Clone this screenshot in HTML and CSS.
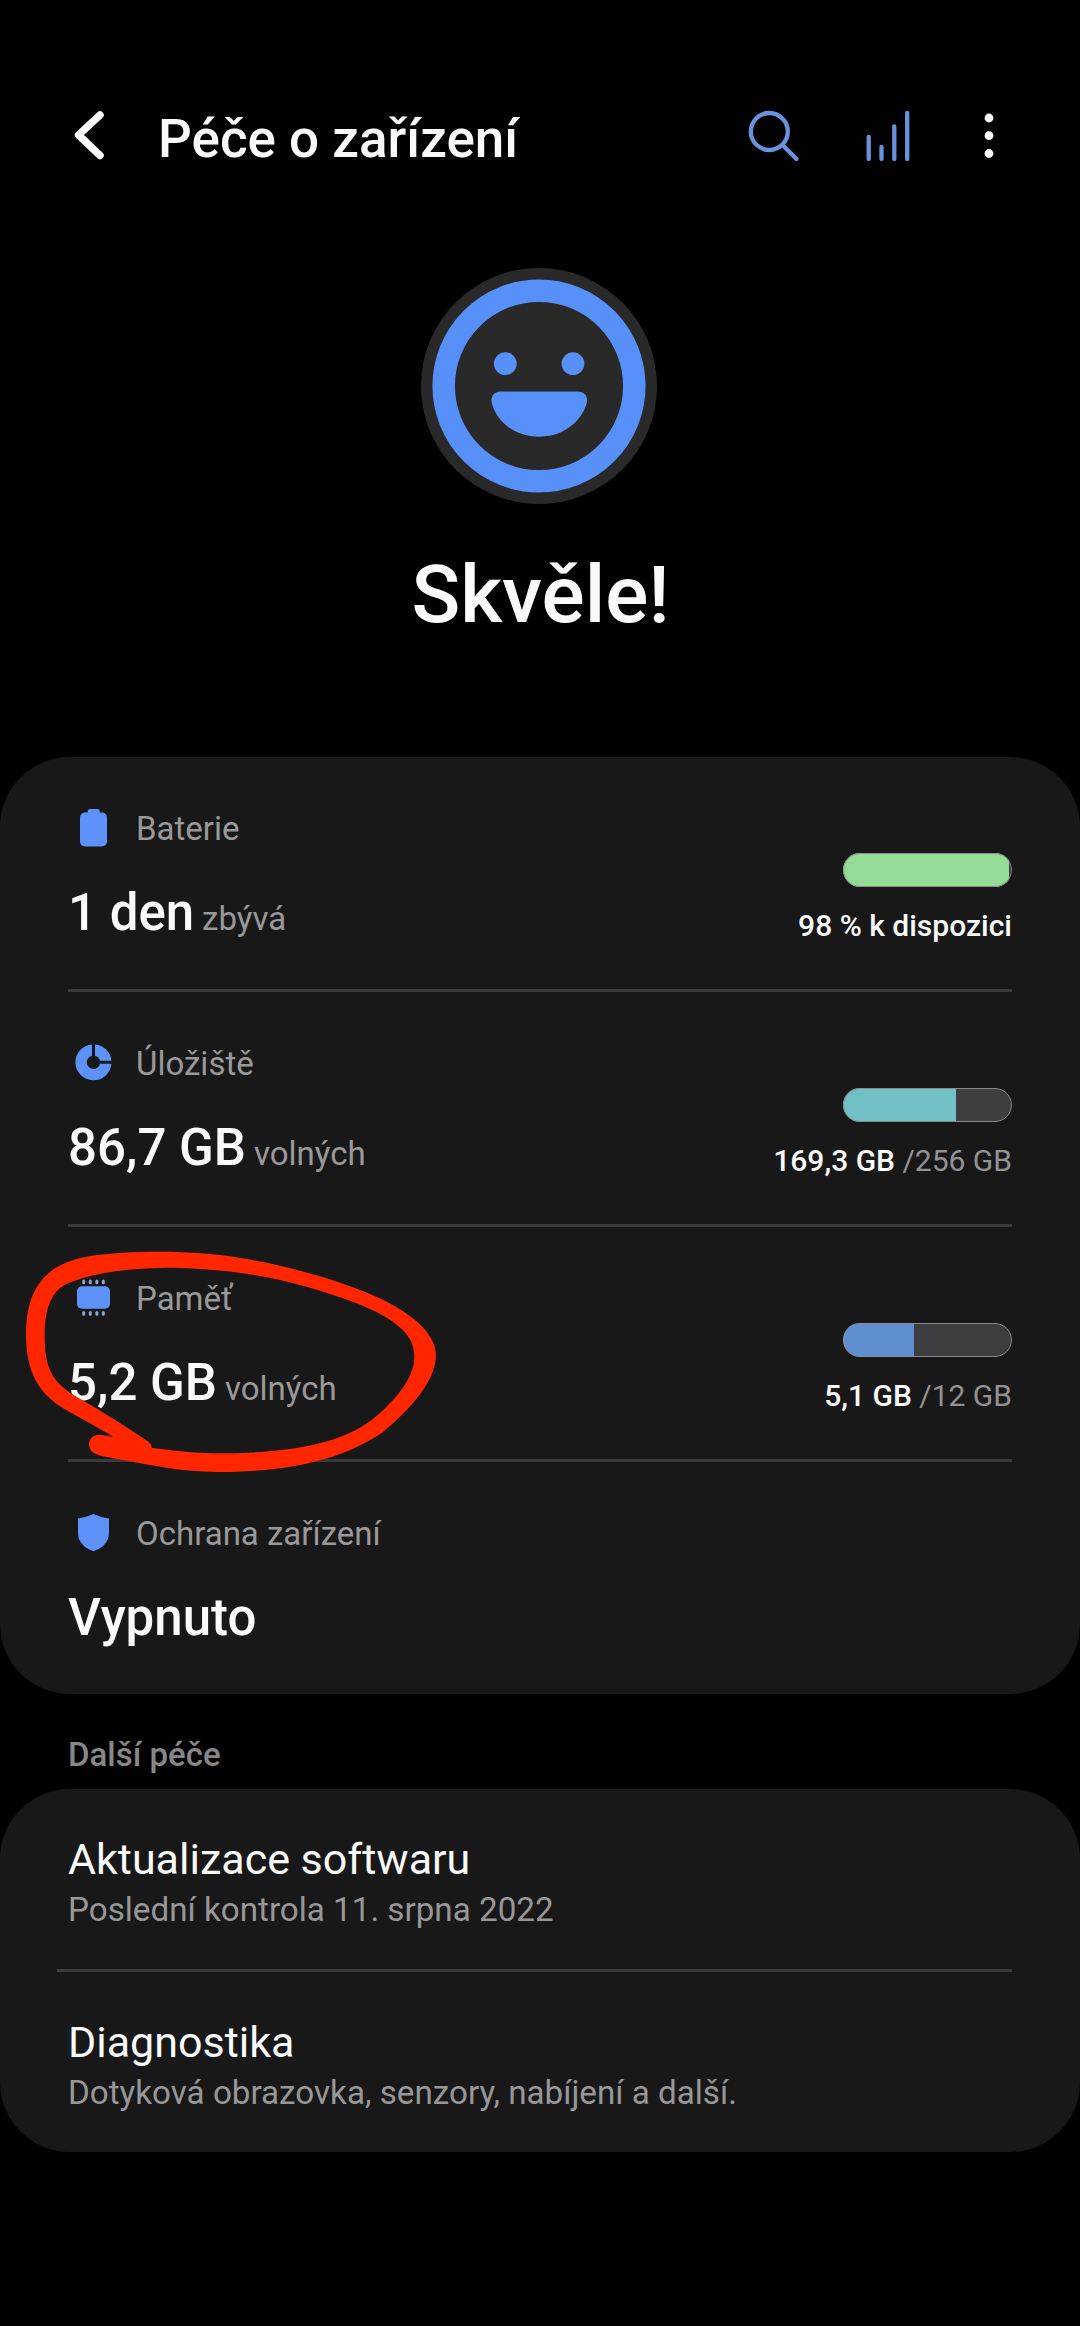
FILE: index.html
```html
<!DOCTYPE html>
<html lang="cs">
<head>
<meta charset="utf-8">
<title>Péče o zařízení</title>
<link rel="stylesheet" href="styles.css">
</head>
<body>
<header class="topbar">
  <svg class="back" width="40" height="56" viewBox="0 0 40 56"><path d="M31 8 9.500 28 31 48.500"/></svg>
  <h1 class="title">Péče o zařízení</h1>
  <svg class="search" width="56" height="56" viewBox="0 0 56 56"><circle cx="25.300" cy="24.500" r="18.500"/><path d="M39 38.500 52.500 52"/></svg>
  <svg class="stats" width="56" height="56" viewBox="0 0 56 56"><path d="M8.700 30V52M21.500 40V52M34.300 19.500V52M47.200 6V52"/></svg>
  <svg class="more" width="16" height="56" viewBox="0 0 16 56"><circle cx="8" cy="11" r="4.400"/><circle cx="8" cy="28.700" r="4.400"/><circle cx="8" cy="46.500" r="4.400"/></svg>
</header>

<section class="status">
  <svg width="236" height="236" viewBox="-118 -118 236 236">
    <circle r="118" fill="#292929"/>
    <circle r="95.300" fill="none" stroke="#5790f9" stroke-width="22.500"/>
    <g fill="#5790f9">
      <circle cx="-33.700" cy="-22.300" r="11.400"/>
      <circle cx="34" cy="-22.300" r="11.400"/>
      <path d="M-38 5.500H38.500C46 5.500 49.500 11 47.500 18C41 38 22 50.700 0 50.700S-41 38 -47 18C-49 11 -45.500 5.500 -38 5.500Z"/>
    </g>
  </svg>
  <p class="verdict">Skvěle!</p>
</section>

<section class="card">
  <div class="row">
    <div class="info">
      <div class="label"><svg class="icon" viewBox="0 0 40 40"><path d="M13.700 4V2Q13.700 0 15.700 0H23.700Q25.700 0 25.700 2V4Z"/><rect x="6" y="3.500" width="27" height="34" rx="5"/></svg>Baterie</div>
      <div class="value">1 den<span class="unit">zbývá</span></div>
    </div>
    <div class="usage">
      <div class="meter"><div class="fill battery" style="width:98.500%"></div></div>
      <div class="amount">98 % k dispozici</div>
    </div>
  </div>
  <div class="row">
    <div class="info">
      <div class="label"><svg class="icon" viewBox="0 0 40 40"><path d="M18 .4V11.800A6.700 6.700 0 1 0 26 19.800H37.400A18 18 0 1 1 18 .4Z"/><path d="M21 .4A18 18 0 0 1 37.400 16.800H26A6.700 6.700 0 0 0 21 11.800Z"/></svg>Úložiště</div>
      <div class="value">86,7 GB<span class="unit">volných</span></div>
    </div>
    <div class="usage">
      <div class="meter"><div class="fill storage" style="width:67%"></div></div>
      <div class="amount">169,3 GB <span class="total">/256 GB</span></div>
    </div>
  </div>
  <div class="row">
    <div class="info">
      <div class="label"><svg class="icon" viewBox="0 0 40 40"><rect x="3" y="7.300" width="33" height="22.400" rx="5"/><path class="pins" d="M9.700 2V3.700M16.300 2V3.700M22.800 2V3.700M29.300 2V3.700M9.700 33.500V35.200M16.300 33.500V35.200M22.800 33.500V35.200M29.300 33.500V35.200"/></svg>Paměť</div>
      <div class="value">5,2 GB<span class="unit">volných</span></div>
    </div>
    <div class="usage">
      <div class="meter"><div class="fill memory" style="width:41.800%"></div></div>
      <div class="amount">5,1 GB <span class="total">/12 GB</span></div>
    </div>
    <svg class="marker" viewBox="0 0 1320 1380"><path fill-rule="evenodd" d="M340 1251C300 1225 240 1195 190 1165C120 1122 78 1060 78 945C78 800 140 730 270 708C400 690 600 690 740 717C880 742 1010 780 1110 822C1230 872 1308 940 1308 1005C1308 1080 1235 1165 1150 1235C1050 1305 900 1356 655 1356C530 1356 430 1330 320 1311C285 1306 267 1295 267 1273C267 1255 280 1243 300 1244C315 1245 328 1249 340 1251ZM455 1283C456 1274 448 1266 438 1260C350 1200 280 1160 210 1118C155 1080 134 1040 134 945C134 850 165 800 215 786C300 752 420 743 520 743C660 746 800 765 930 803C1040 836 1110 862 1160 893C1220 930 1243 965 1243 1010C1243 1060 1210 1110 1160 1160C1080 1240 970 1300 640 1300C570 1298 510 1290 455 1283Z"/></svg>
  </div>
  <div class="row">
    <div class="info">
      <div class="label"><svg class="icon" viewBox="0 0 40 40"><path d="M19.500 0Q27 3.500 35 4.500V19C35 28 28 34.500 19.500 37.300C11 34.500 4 28 4 19V4.500Q12 3.500 19.500 0Z"/></svg>Ochrana zařízení</div>
      <div class="value">Vypnuto</div>
    </div>
  </div>
</section>

<h2 class="heading">Další péče</h2>

<section class="card more-care">
  <div class="item">
    <div class="name">Aktualizace softwaru</div>
    <div class="detail">Poslední kontrola 11. srpna 2022</div>
  </div>
  <hr class="rule">
  <div class="item">
    <div class="name">Diagnostika</div>
    <div class="detail">Dotyková obrazovka, senzory, nabíjení a další.</div>
  </div>
</section>
</body>
</html>
```

FILE: styles.css
```css
* { box-sizing: border-box; margin: 0; padding: 0; }
body {
  width: 1080px;
  height: 2326px;
  overflow: hidden;
  background: #000;
  color: #fafafa;
  font-family: Roboto, "Liberation Sans", sans-serif;
}
svg { display: block; flex: none; }

.topbar { display: flex; align-items: flex-start; padding: 107px 0 0 69px; height: 268px; }
.topbar svg { fill: none; stroke: #6a93de; stroke-width: 4.3; stroke-linecap: round; }
.topbar .back { stroke: #fafafa; stroke-width: 7.5; stroke-linejoin: round; }
.title { width: 584px; margin-left: 49px; font-size: 53px; font-weight: 500; line-height: 64px; white-space: nowrap; }
.topbar .search { margin-left: 2px; }
.topbar .stats { margin-left: 60px; }
.topbar .more { margin-left: 65px; fill: #fff; stroke: none; }

.status { display: flex; flex-direction: column; align-items: center; height: 489px; padding-right: 2px; }
.verdict { margin: 41px 0 0 3px; font-size: 80.5px; font-weight: 500; line-height: 100px; }

.card { background: #181818; border-radius: 70px; }
.row {
  position: relative;
  display: flex;
  justify-content: space-between;
  height: 235px;
  margin: 0 68px;
  border-bottom: 3px solid #3b3a3b;
}
.row:last-child { border: 0; height: 232px; }
.info { padding-top: 52px; }
.label { display: flex; gap: 22px; padding-left: 6px; font-size: 33px; line-height: 40px; color: #999; }
.icon { width: 40px; height: 40px; fill: #5c92f9; }
.pins { stroke: #8ba6d8; stroke-width: 3; stroke-linecap: round; }
.value { margin-top: 34px; font-size: 51px; font-weight: 500; line-height: 60px; white-space: nowrap; }
.unit { margin-left: 8px; font-size: 33px; font-weight: 400; line-height: 1; color: #999; }

.usage { display: flex; flex-direction: column; align-items: flex-end; padding-top: 96px; }
.meter { position: relative; width: 169px; height: 34px; border-radius: 17px; background: #3e3d3f; overflow: hidden; }
.meter::after { content: ""; position: absolute; inset: 0; border: 1px solid #8b8b8b; border-radius: 17px; }
.fill { height: 100%; }
.battery { background: #94db96; }
.storage { background: #70c0c5; }
.memory { background: #5e8ed0; }
.amount { margin-top: 21px; font-size: 30px; font-weight: 500; line-height: 36px; white-space: nowrap; }
.total { font-weight: 400; color: #939293; }

.marker { position: absolute; left: -68px; top: -207px; width: 440px; height: 460px; fill: #ff2600; }

.heading { height: 95px; padding: 41px 0 0 68px; font-size: 33px; font-weight: 500; line-height: 40px; color: #878787; }

.more-care { height: 363px; }
.item { height: 180px; padding: 44px 68px 0; }
.name { font-size: 43px; line-height: 52px; }
.detail { margin-top: 5px; font-size: 33.2px; line-height: 40px; color: #979797; }
.rule { height: 3px; margin: 0 68px 0 57px; border: 0; background: #3b3b3b; }
```
